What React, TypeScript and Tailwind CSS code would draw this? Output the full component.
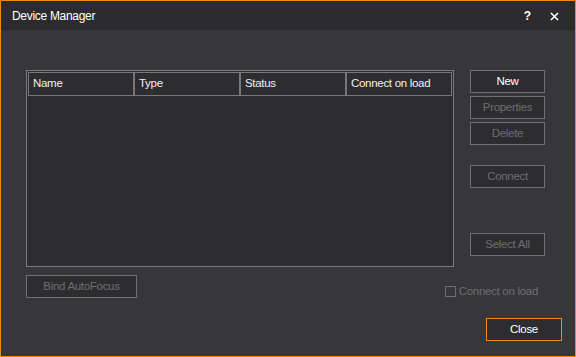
import React from 'react'

const columns = ['Name', 'Type', 'Status', 'Connect on load']

const Btn = ({ label, disabled, className = '' }: { label: string; disabled?: boolean; className?: string }) => (
    <div
        className={`w-[75px] h-[23px] flex items-center justify-center border border-[#707070] bg-[#2d2d30] text-[11.5px] tracking-[-0.3px] ${
            disabled ? 'text-[#6e6e72]' : 'text-white'
        } ${className}`}
    >
        {label}
    </div>
)

export default function App() {
    return (
        <div
            className="w-[576px] h-[357px] border border-[#f08a14] bg-[#37363b] flex flex-col"
            style={{ fontFamily: '"Liberation Sans", Arial, sans-serif' }}
        >
            {/* Title bar */}
            <div className="h-[29px] bg-[#2c2c2f] flex items-center pl-[11px] pr-[16px] text-white text-[12px]">
                <span className="tracking-[-0.3px]">Device Manager</span>
                <span className="ml-auto mr-[19px] font-bold text-[12px]">?</span>
                <svg width="9" height="9" viewBox="0 0 9 9" className="mt-[1px]">
                    <path d="M1 1 L8 8 M8 1 L1 8" stroke="white" strokeWidth="1.6" />
                </svg>
            </div>

            <div className="flex-1 flex flex-col pl-[25px] pr-[13px] pt-[40px]">
                <div className="flex">
                    {/* Device list */}
                    <div className="w-[428px] h-[197px] border border-[#7b7b7e] bg-[#2d2d30] p-[1px]">
                        <div className="flex">
                            {columns.map((c) => (
                                <div
                                    key={c}
                                    className="w-[106px] h-[24px] border border-[#78787b] flex items-center pl-[4px] text-[11.5px] tracking-[-0.3px] text-[#f0f0f0]"
                                >
                                    {c}
                                </div>
                            ))}
                        </div>
                    </div>

                    {/* Buttons */}
                    <div className="ml-[16px] flex flex-col">
                        <Btn label="New" />
                        <Btn label="Properties" disabled className="mt-[3px]" />
                        <Btn label="Delete" disabled className="mt-[3px]" />
                        <Btn label="Connect" disabled className="mt-[20px]" />
                        <Btn label="Select All" disabled className="mt-[45px]" />
                    </div>
                </div>

                <div className="flex items-start mt-[8px]">
                    <div className="w-[111px] h-[23px] flex items-center justify-center border border-[#707070] bg-[#2d2d30] text-[11.5px] tracking-[-0.3px] text-[#6e6e72]">
                        Bind AutoFocus
                    </div>
                    <div className="ml-auto mr-[24px] mt-[8px] flex items-center text-[11.5px] tracking-[-0.3px] text-[#6e6e72]">
                        <div className="w-[11px] h-[11px] border border-[#6e6e72] mr-[3px]" />
                        Connect on load
                    </div>
                </div>

                <div className="flex justify-end mt-[18px]">
                    <div className="w-[76px] h-[23px] flex items-center justify-center border border-[#f08a14] bg-[#2d2d30] text-[11.5px] tracking-[-0.3px] text-white">
                        Close
                    </div>
                </div>
            </div>
        </div>
    )
}
